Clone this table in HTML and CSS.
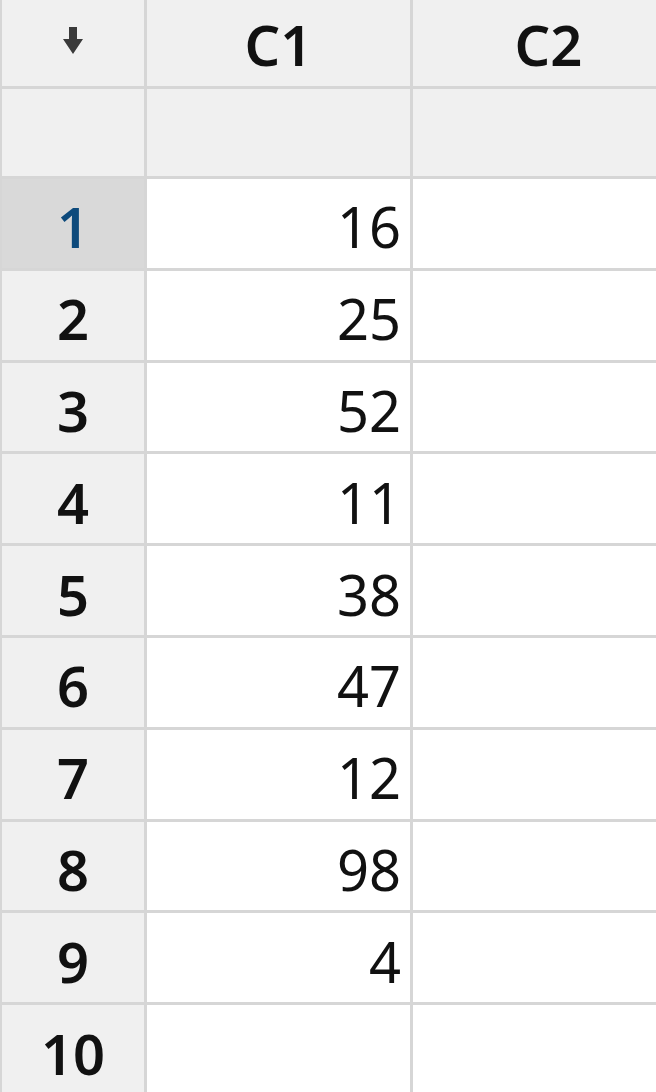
FILE: index.html
```html
<!DOCTYPE html>
<html>
<head>
<meta charset="utf-8">
<link rel="stylesheet" href="styles.css">
</head>
<body>
<div class="sheet">
  <div class="cell corner"><svg class="arrow" width="20" height="27" viewBox="0 0 20 27"><path d="M6 0 H14 V12 H20 L10 27 L0 12 H6 Z" fill="#3a3a3a"/></svg></div>
  <div class="cell colhead">C1</div>
  <div class="cell colhead">C2</div>

  <div class="cell head"></div>
  <div class="cell head"></div>
  <div class="cell head"></div>

  <div class="cell rowhead selected">1</div><div class="cell val">16</div><div class="cell val"></div>
  <div class="cell rowhead">2</div><div class="cell val">25</div><div class="cell val"></div>
  <div class="cell rowhead">3</div><div class="cell val">52</div><div class="cell val"></div>
  <div class="cell rowhead">4</div><div class="cell val">11</div><div class="cell val"></div>
  <div class="cell rowhead">5</div><div class="cell val">38</div><div class="cell val"></div>
  <div class="cell rowhead">6</div><div class="cell val">47</div><div class="cell val"></div>
  <div class="cell rowhead">7</div><div class="cell val">12</div><div class="cell val"></div>
  <div class="cell rowhead">8</div><div class="cell val">98</div><div class="cell val"></div>
  <div class="cell rowhead">9</div><div class="cell val">4</div><div class="cell val"></div>
  <div class="cell rowhead">10</div><div class="cell val"></div><div class="cell val"></div>
</div>
</body>
</html>
```

FILE: styles.css
```css
html, body {
  margin: 0;
  padding: 0;
  overflow: hidden;
  background: #ffffff;
}

.sheet {
  display: grid;
  grid-template-columns: 142px 263px 271px;
  grid-template-rows: 86px 87px repeat(10, 88.8px);
  gap: 3px;
  padding-left: 2px;
  background: #d6d6d6;
  width: 656px;
  height: 1092px;
  overflow: hidden;
  box-sizing: border-box;
  font-family: "Noto Sans", "Open Sans", sans-serif;
  font-size: 56px;
  color: #111111;
}

.cell {
  display: flex;
  align-items: center;
  justify-content: center;
  background: #f0f0f0;
  padding-top: 6px;
  box-sizing: border-box;
}

.corner {
  padding-top: 0;
}

.arrow {
  display: block;
  margin-top: -5px;
}

.colhead {
  font-weight: 600;
  padding-top: 2px;
}

.rowhead {
  font-weight: 600;
}

.rowhead.selected {
  background: #d9d9d9;
  color: #0d4a7c;
}

.val {
  background: #ffffff;
  justify-content: flex-end;
  padding-right: 9px;
}
```
